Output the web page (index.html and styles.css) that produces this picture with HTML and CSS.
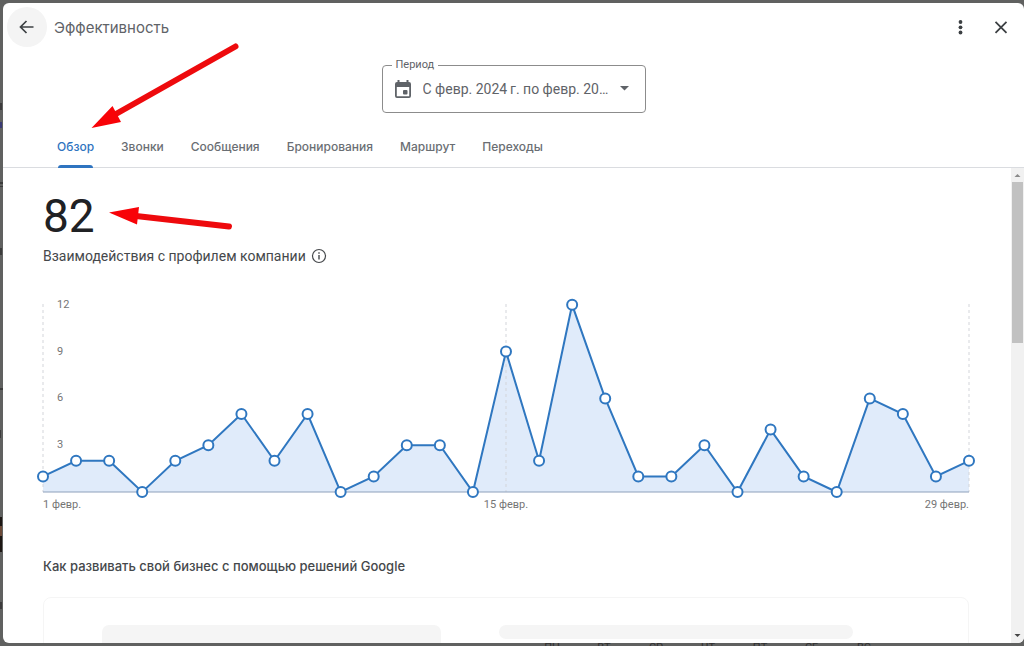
FILE: index.html
```html
<!DOCTYPE html>
<html lang="ru">
<head>
<meta charset="utf-8">
<meta name="viewport" content="width=device-width, initial-scale=1">
<title>Эффективность</title>
<link rel="stylesheet" href="styles.css">
</head>
<body>
<div class="page">
  <svg class="page-edge" width="3" height="646" aria-hidden="true">
    <path d="M0 103h2v7H0zM0 182h3v2H0zM0 186h3v1H0zM0 248h2v7H0zM0 388h3v2H0zM0 430h1v8H0zM0 602h2v7H0z" fill="#3c3c3c"/>
    <path d="M0 122h2v6H0z" fill="#3b3b75"/>
    <path d="M0 517h2v35H0z" fill="#1d1714"/>
    <path d="M0 526h2v10H0z" fill="#6b4a38"/>
  </svg>
  <main class="dialog">
    <header class="header">
      <button class="icon-button back" aria-label="Назад">
        <svg width="24" height="24" viewBox="0 0 24 24"><path d="M18.500 12H6M11.500 6L5.500 12l6 6" fill="none" stroke="currentColor" stroke-width="1.700"/></svg>
      </button>
      <h1 class="title">Эффективность</h1>
      <button class="icon-button" aria-label="Ещё">
        <svg width="24" height="24" viewBox="0 0 24 24" fill="currentColor"><circle cx="11.500" cy="7" r="1.900"/><circle cx="11.500" cy="12.300" r="1.900"/><circle cx="11.500" cy="17.500" r="1.900"/></svg>
      </button>
      <button class="icon-button" aria-label="Закрыть">
        <svg width="24" height="24" viewBox="0 0 24 24"><path d="M6.500 6.800l11 11M17.500 6.800l-11 11" fill="none" stroke="currentColor" stroke-width="1.800"/></svg>
      </button>
    </header>

    <fieldset class="period">
      <legend class="period-legend"><label for="period">Период</label></legend>
      <div class="period-row">
        <svg width="18" height="20" viewBox="0 0 18 20" aria-hidden="true"><path d="M3.500 1h2v2h7V1h2v2H15a2 2 0 0 1 2 2v12a2 2 0 0 1-2 2H3a2 2 0 0 1-2-2V5a2 2 0 0 1 2-2h.5zM2.800 8v9.200h12.400V8z" fill="currentColor" fill-rule="evenodd"/><rect x="9" y="11" width="4.500" height="4.500" rx="1" fill="currentColor"/></svg>
        <select class="period-select" id="period"><option>С февр. 2024&#8201;г. по февр. 20…</option></select>
        <svg class="caret" width="10" height="5" viewBox="0 0 10 5" aria-hidden="true"><path d="M0 0h9L4.500 4.500z" fill="currentColor"/></svg>
      </div>
    </fieldset>

    <nav class="tabs">
      <a class="tab active" href="#overview">Обзор</a>
      <a class="tab" href="#calls">Звонки</a>
      <a class="tab" href="#messages">Сообщения</a>
      <a class="tab" href="#bookings">Бронирования</a>
      <a class="tab" href="#route">Маршрут</a>
      <a class="tab" href="#clicks">Переходы</a>
    </nav>

    <div class="body">
      <section class="content" id="overview">
        <p class="total">82</p>
        <div class="caption">
          <span>Взаимодействия с профилем компании</span>
          <svg width="16" height="16" viewBox="0 0 16 16" role="img" aria-label="Сведения"><circle cx="8" cy="8" r="6.500" fill="none" stroke="currentColor" stroke-width="1.200"/><path d="M8 7v4.500M8 4.300v1.500" stroke="currentColor" stroke-width="1.400"/></svg>
        </div>
        <svg class="chart" id="chart" viewBox="0 0 926 188" role="img" aria-label="Взаимодействия по дням"></svg>
        <div class="dates"><span>1 февр.</span><span>15 февр.</span><span class="last">29 февр.</span></div>
        <h2 class="subtitle">Как развивать свой бизнес с помощью решений Google</h2>
        <div class="card">
          <div class="placeholder block"></div>
          <div class="placeholder line"></div>
        </div>
      </section>
      <div class="scrollbar" aria-hidden="true">
        <svg width="13" height="14" viewBox="0 0 13 14"><path d="M3.500 9L6.500 6l3 3z" fill="#8a8a8a"/></svg>
        <div class="track"><div class="thumb"></div></div>
        <svg width="13" height="14" viewBox="0 0 13 14"><path d="M3.500 5h6l-3 3z" fill="#444"/></svg>
      </div>
    </div>
  </main>
  <div class="weekdays" aria-hidden="true"><span>ПН</span><span>ВТ</span><span>СР</span><span>ЧТ</span><span>ПТ</span><span>СБ</span><span>ВС</span></div>

  <svg class="arrows" width="240" height="240" viewBox="0 0 240 240" aria-hidden="true">
    <path d="M235.500 46.500L115 114.500M229 226.500L136 216" stroke="#ee0a0d" stroke-width="6" stroke-linecap="round"/>
    <path d="M91.500 128L112.500 106l8.500 16zM109 212.500l30-5.500-2 17.500z" fill="#f80308"/>
  </svg>
</div>
<script src="chart.js"></script>
</body>
</html>
```

FILE: styles.css
```css
* {
  box-sizing: border-box;
}

body {
  margin: 0;
  background: #606160;
  color: #45484b;
  font-family: Roboto, "Noto Sans", sans-serif;
}

.page {
  position: relative;
  display: flex;
  flex-direction: column;
  height: 100vh;
  padding: 3px 0 3px 3px;
  overflow: hidden;
}

.page-edge,
.arrows {
  position: absolute;
  top: 0;
  left: 0;
  pointer-events: none;
}

.dialog {
  display: flex;
  flex: 1;
  flex-direction: column;
  min-height: 0;
  overflow: hidden;
  background: #fff;
  border-radius: 6px;
}

.header {
  display: flex;
  align-items: center;
  padding: 4px 3px 0 4px;
}

.icon-button {
  display: grid;
  place-items: center;
  width: 40px;
  height: 40px;
  padding: 0;
  border: 0;
  border-radius: 50%;
  background: none;
  color: #3c4043;
}

.back {
  background: #f4f4f4;
}

.title {
  flex: 1;
  margin: 2px 0 0 7px;
  color: #5f6368;
  font: 400 15px/24px Inter, "Noto Sans", sans-serif;
}

.period {
  align-self: center;
  width: 262px;
  height: 56px;
  margin: 10px 0 0;
  padding: 0 15px 0 11px;
  border: 1px solid #8c8c8c;
  border-radius: 4px;
  color: #5f6368;
}

.period-legend {
  padding: 0 4px;
  margin-left: -2px;
  font-size: 11px;
  line-height: 16px;
}

.period-row {
  display: flex;
  align-items: center;
  gap: 11px;
  height: 31px;
}

.period-select {
  flex: 1;
  min-width: 0;
  padding: 0;
  border: 0;
  appearance: none;
  background: none;
  color: inherit;
  font: 400 14px/20px Roboto, sans-serif;
}

.caret {
  flex: none;
}

.tabs {
  display: flex;
  gap: 27px;
  margin-top: 14px;
  padding: 0 54px;
  border-bottom: 1px solid #dadce0;
}

.tab {
  display: grid;
  grid-template-rows: 37px 3px;
  align-items: center;
  padding-top: 1px;
  margin-bottom: -1px;
  color: #6a6e73;
  font: 500 12px/16px Inter, "Noto Sans", sans-serif;
  text-decoration: none;
}

.active {
  color: #2f74c0;
}

.active::after {
  content: "";
  height: 3px;
  margin: 0 1px;
  border-radius: 3px 3px 0 0;
  background: #2f74c0;
}

.body {
  display: flex;
  flex: 1;
  min-height: 0;
}

.content {
  flex: 1;
  min-width: 0;
  padding: 20px 42px 0 40px;
  overflow: hidden;
}

.total {
  margin: 0;
  color: #202124;
  font: 400 46px/56px Roboto, sans-serif;
}

.caption {
  display: flex;
  align-items: center;
  gap: 5px;
  height: 24px;
  font-size: 14px;
}

.chart {
  display: block;
  width: 100%;
  margin-top: 36px;
  overflow: visible;
}

.area {
  fill: #e0ebfa;
}

.baseline {
  stroke: #8ea0bb;
}

.guide {
  stroke: #d3d5da;
  stroke-dasharray: 3 3;
}

.series {
  fill: none;
  stroke: #2f77c0;
  stroke-width: 2;
}

.point {
  fill: #fff;
  stroke: #2f77c0;
  stroke-width: 2;
}

.scale {
  fill: #757575;
  font-size: 11px;
}

.dates {
  display: grid;
  grid-template-columns: 1fr auto 1fr;
  margin-top: 4px;
  color: #757575;
  font-size: 11px;
  line-height: 18px;
}

.last {
  text-align: right;
}

.subtitle {
  margin: 40px 0 0;
  font: 500 13px/24px Inter, "Noto Sans", sans-serif;
}

.card {
  display: grid;
  grid-template-columns: 339px 354px;
  gap: 58px;
  height: 200px;
  margin-top: 19px;
  padding: 27px 58px;
  border: 1px solid #f5f5f5;
  border-radius: 8px;
}

.placeholder {
  background: #f5f5f5;
  border-radius: 7px;
}

.block {
  height: 120px;
}

.line {
  height: 14px;
}

.scrollbar {
  display: flex;
  flex-direction: column;
  width: 13px;
  background: #f1f1f1;
}

.track {
  flex: 1;
  padding: 0 1px;
}

.thumb {
  height: 36%;
  background: #c1c1c1;
}

.weekdays {
  position: absolute;
  top: calc(100% - 4px);
  left: 526px;
  display: grid;
  grid-template-columns: repeat(7, 52px);
  color: #303030;
  font-size: 11px;
  line-height: 12px;
  text-align: center;
  clip-path: inset(1px 0 0 0);
}
```

FILE: chart.js
```js
const values = [1, 2, 2, 0, 2, 3, 5, 2, 5, 0, 1, 3, 3, 0, 9, 2, 12, 6, 1, 1, 3, 0, 4, 1, 0, 6, 5, 1, 2];
const width = 926;
const base = 188;
const unit = 15.6;
const points = values.map((v, i) => [(i * width) / (values.length - 1), base - v * unit]);
const line = points.map((p) => p.join(",")).join(" ");

const guides = [0, width / 2, width]
  .map((x) => `<line class="guide" x1="${x}" x2="${x}" y1="0" y2="${base}"/>`)
  .join("");
const labels = [12, 9, 6, 3]
  .map((v) => `<text class="scale" x="14" y="${base - v * unit + 3}">${v}</text>`)
  .join("");
const dots = points
  .map(([x, y]) => `<circle class="point" cx="${x}" cy="${y}" r="5"/>`)
  .join("");

document.getElementById("chart").innerHTML =
  `<polygon class="area" points="0,${base} ${line} ${width},${base}"/>` +
  guides +
  `<line class="baseline" x1="0" x2="${width}" y1="${base}" y2="${base}"/>` +
  `<polyline class="series" points="${line}"/>` +
  labels +
  dots;
```
